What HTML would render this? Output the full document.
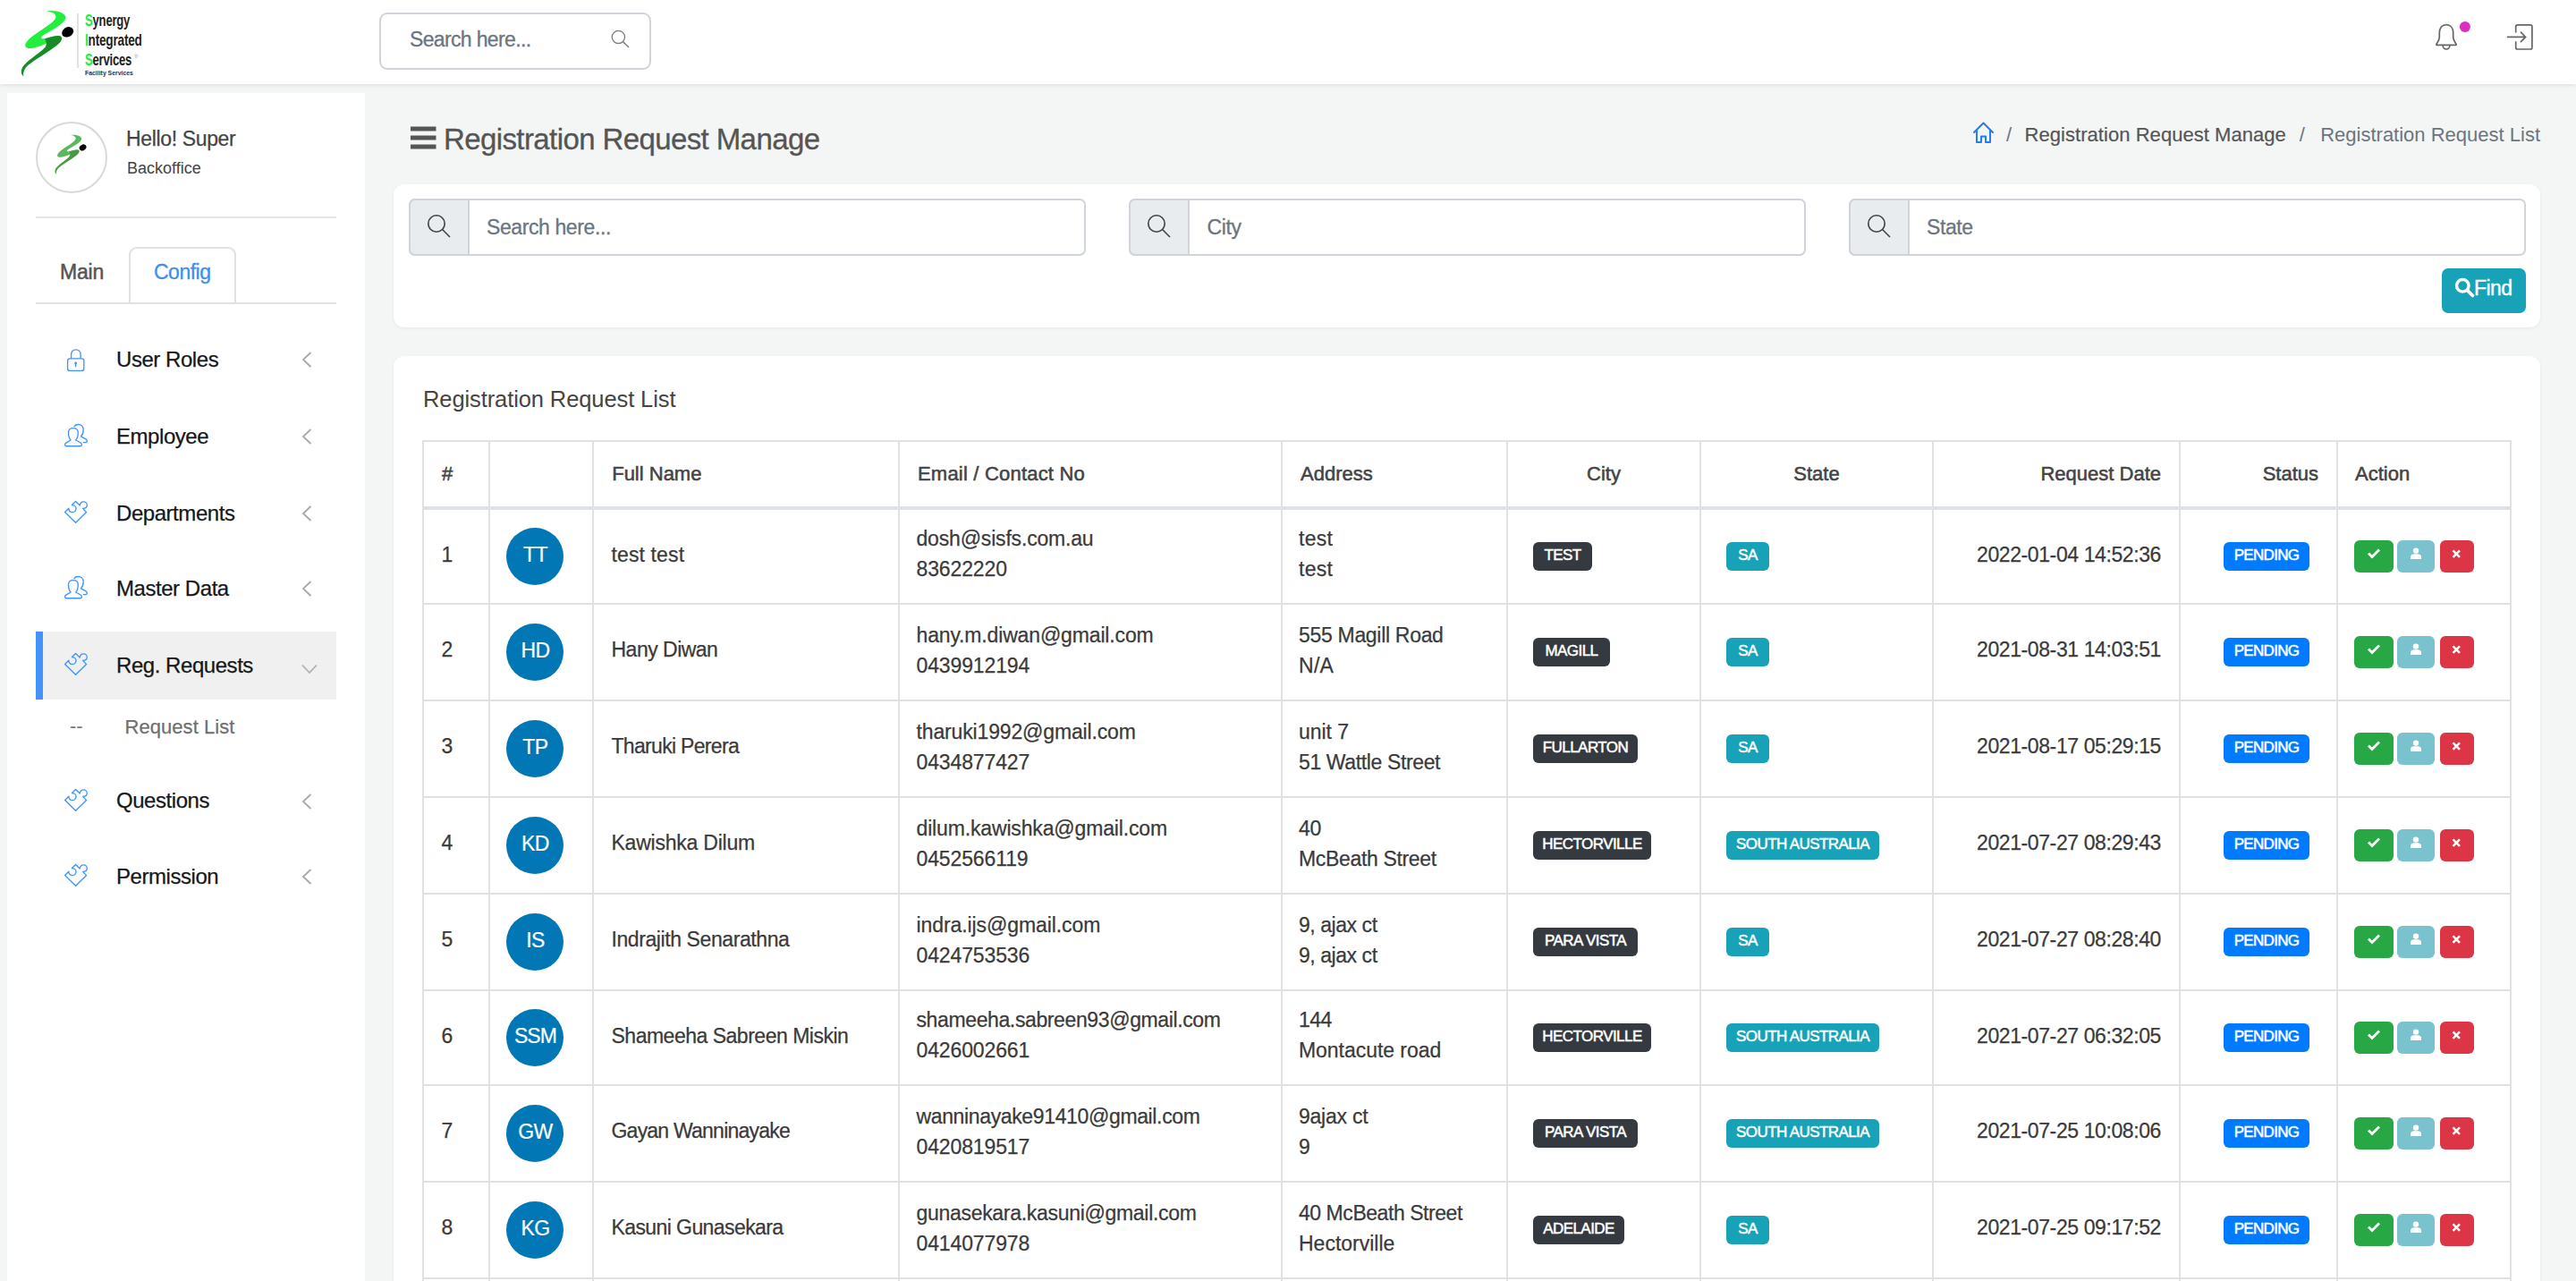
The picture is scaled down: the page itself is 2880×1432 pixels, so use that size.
<!DOCTYPE html>
<html><head><meta charset="utf-8"><title>Registration Request List</title>
<style>
html,body{margin:0;padding:0;}
body{width:2880px;height:1432px;overflow:hidden;position:relative;background:#f4f6f6;font-family:"Liberation Sans",sans-serif;}
.t{position:absolute;line-height:1;white-space:nowrap;}
.r{position:absolute;box-sizing:border-box;}
svg{position:absolute;overflow:visible;}
</style></head><body>

<div class="r" style="left:0px;top:0px;width:2880px;height:94px;background:#fff;box-shadow:0 1px 5px rgba(0,0,0,0.10);z-index:2;"></div>
<svg style="left:23.35px;top:11.13px;z-index:3" width="60.09" height="74.18" viewBox="180 150 810 1000"><path d="M575,168 C720,150 870,195 858,275 C845,355 680,440 540,520 C470,560 480,590 545,585 C620,578 700,545 770,540 L570,655 C450,705 300,765 255,705 C225,645 340,560 460,478 C580,398 700,320 712,262 C722,210 650,182 575,168 Z" fill="#22ee3c"/><path d="M545,585 C640,555 720,530 775,545 C820,560 810,620 735,680 C610,780 400,900 300,980 C235,1035 215,1095 225,1150 C180,1120 175,1040 240,975 C330,880 470,800 545,720 C580,680 575,640 545,585 Z" fill="#168c27"/><ellipse cx="890" cy="485" rx="92" ry="72" transform="rotate(-30 890 485)" fill="#000"/></svg>
<div class="r" style="left:86px;top:15px;width:2px;height:61px;background:#e2e2e2;z-index:3;"></div>
<div class="t" style="left:94.5px;top:13.59px;font-size:18.2px;font-weight:700;color:#231f20;transform:scaleX(0.72);transform-origin:0 0;z-index:3;letter-spacing:-0.3px"><span style="color:#22ee3c">S</span>ynergy</div>
<div class="t" style="left:94.5px;top:35.89px;font-size:18.2px;font-weight:700;color:#231f20;transform:scaleX(0.75);transform-origin:0 0;z-index:3;letter-spacing:-0.3px"><span style="color:#22ee3c">I</span>ntegrated</div>
<div class="t" style="left:94.5px;top:57.59px;font-size:18.2px;font-weight:700;color:#231f20;transform:scaleX(0.72);transform-origin:0 0;z-index:3;letter-spacing:-0.3px"><span style="color:#22ee3c">S</span>ervices</div>
<div class="t" style="left:150px;top:60px;font-size:6px;color:#999;z-index:3">&reg;</div>
<div class="t" style="left:94.5px;top:77.83px;font-size:8px;font-weight:700;color:#333;transform:scaleX(0.86);transform-origin:0 0;z-index:3">Facility Services</div>
<div class="r" style="left:424px;top:14px;width:304px;height:64px;border:2px solid #cfd4da;border-radius:9px;background:#fff;z-index:3;"></div>
<div class="t" style="top:33px;font-size:23px;color:#6c757d;letter-spacing:-0.65px;left:458.00px;z-index:3;-webkit-text-stroke:0.3px #6c757d;">Search here...</div>
<svg style="left:680px;top:30px;z-index:3" width="30" height="30" viewBox="0 0 30 30"><circle cx="11.4" cy="11.4" r="7.1" fill="none" stroke="#7a7a7a" stroke-width="1.3"/><line x1="16.6" y1="16.8" x2="22.6" y2="22.6" stroke="#7a7a7a" stroke-width="1.4" stroke-linecap="round"/></svg>
<svg style="left:2710px;top:15px;z-index:3" width="140" height="45" viewBox="0 0 140 45"><path d="M14,34.3 C15.5,32 17.3,30 17.3,26.5 V21.5 C17.3,16 20.5,12.6 25,12.6 C29.5,12.6 32.7,16 32.7,21.5 V26.5 C32.7,30 34.5,32 36,34.3 C36.5,35 36.2,35.3 35.3,35.3 H14.7 C13.8,35.3 13.5,35 14,34.3 Z" fill="none" stroke="#666" stroke-width="1.7" stroke-linejoin="round"/><path d="M21,35.3 C21,37.8 22.8,40 25,40 C27.2,40 29,37.8 29,35.3" fill="none" stroke="#666" stroke-width="1.7"/><circle cx="45.9" cy="14.9" r="6" fill="#dc2fbe"/><path d="M102.7,21.5 V14.8 C102.7,13.7 103.6,12.8 104.7,12.8 H118.9 C120,12.8 120.9,13.7 120.9,14.8 V38 C120.9,39.1 120,40 118.9,40 H104.7 C103.6,40 102.7,39.1 102.7,38 V31.25" fill="none" stroke="#666" stroke-width="1.7"/><path d="M93.75,26.4 H113.5 M108.4,21.2 L113.6,26.4 L108.4,31.6" fill="none" stroke="#666" stroke-width="1.7" stroke-linecap="round"/></svg>
<div class="r" style="left:8px;top:104px;width:400px;height:1328px;background:#fff;"></div>
<div class="r" style="left:40px;top:136px;width:80px;height:80px;border:2px solid #d9d9d9;border-radius:50%;background:#fff;"></div>
<svg style="left:60.80px;top:149.50px;z-index:3" width="36.05" height="44.51" viewBox="180 150 810 1000"><path d="M575,168 C720,150 870,195 858,275 C845,355 680,440 540,520 C470,560 480,590 545,585 C620,578 700,545 770,540 L570,655 C450,705 300,765 255,705 C225,645 340,560 460,478 C580,398 700,320 712,262 C722,210 650,182 575,168 Z" fill="#5cb85c"/><path d="M545,585 C640,555 720,530 775,545 C820,560 810,620 735,680 C610,780 400,900 300,980 C235,1035 215,1095 225,1150 C180,1120 175,1040 240,975 C330,880 470,800 545,720 C580,680 575,640 545,585 Z" fill="#4a9a45"/><ellipse cx="890" cy="485" rx="92" ry="72" transform="rotate(-30 890 485)" fill="#000"/></svg>
<div class="t" style="top:144px;font-size:23px;color:#444;letter-spacing:-0.35px;left:141.00px;-webkit-text-stroke:0.25px #444;">Hello! Super</div>
<div class="t" style="top:179px;font-size:18px;color:#444;left:142.00px;">Backoffice</div>
<div class="r" style="left:40px;top:242px;width:336px;height:2px;background:#e3e6e9;"></div>
<div class="t" style="top:293px;font-size:23px;color:#555;letter-spacing:-0.2px;left:67.00px;-webkit-text-stroke:0.5px #555;">Main</div>
<div class="r" style="left:144px;top:276px;width:120px;height:64px;border:2px solid #dee2e6;border-bottom:none;border-radius:9px 9px 0 0;background:#fff;"></div>
<div class="t" style="top:293px;font-size:23px;color:#3d8ef0;letter-spacing:-0.5px;left:172.00px;-webkit-text-stroke:0.3px #3d8ef0;">Config</div>
<div class="r" style="left:40px;top:338px;width:336px;height:2px;background:#dee2e6;"></div>
<div class="r" style="left:40px;top:706px;width:336px;height:76px;background:#f0f0f0;"></div>
<div class="r" style="left:40px;top:706px;width:8px;height:76px;background:#4493f8;"></div>
<div class="t" style="top:390px;font-size:24px;color:#15181b;letter-spacing:-0.45px;left:130.00px;-webkit-text-stroke:0.25px #15181b;">User Roles</div>
<svg style="left:64px;top:380px" width="44" height="44" viewBox="0 0 44 44"><rect x="11.6" y="20.8" width="18.2" height="13.6" rx="2.5" fill="none" stroke="#3f95fa" stroke-width="1.35"/><path d="M15.6,20.8 V16 C15.6,12.7 18,10.8 20.85,10.8 C23.7,10.8 26.1,12.7 26.1,16 V20.8" fill="none" stroke="#3f95fa" stroke-width="1.35"/><circle cx="20.6" cy="25.9" r="1.4" fill="#3f95fa"/><line x1="20.6" y1="26" x2="20.6" y2="29.8" stroke="#3f95fa" stroke-width="1.35" stroke-linecap="round"/></svg>
<svg style="left:337px;top:393.1px" width="12" height="18" viewBox="0 0 12 18"><path d="M10.5,1 L2,9 L10.5,17" fill="none" stroke="#a8a8a8" stroke-width="1.8"/></svg>
<div class="t" style="top:476px;font-size:24px;color:#15181b;letter-spacing:-0.45px;left:130.00px;-webkit-text-stroke:0.25px #15181b;">Employee</div>
<svg style="left:64px;top:464px" width="44" height="44" viewBox="0 0 44 44"><path d="M15.1,28 C13,26 12.5,23 12.5,19.5 C12.5,16.5 14.8,14.6 17.9,14.6 C21,14.6 23.3,16.5 23.3,19.5 C23.3,23 22.8,26 20.7,28 L26.2,31 C27.2,31.6 27.4,32.4 27.4,33.3 C27.4,34.3 26.8,34.7 25.8,34.7 H10 C9,34.7 8.6,34.2 8.6,33.3 C8.6,32.3 9,31.6 9.8,31.1 Z" fill="none" stroke="#3f95fa" stroke-width="1.35" stroke-linejoin="round"/><path d="M19,12.5 C20,11.2 21.6,10.5 23.5,10.5 C26.6,10.5 29.2,12.6 29.2,16.5 C29.2,19.5 28.5,22 26.5,23.8 L32,26.9 C33,27.5 33.3,28.3 33.3,29.2 C33.3,30.2 32.5,30.6 31.5,30.6 H29.3" fill="none" stroke="#3f95fa" stroke-width="1.35" stroke-linejoin="round" stroke-linecap="round"/></svg>
<svg style="left:337px;top:479.4px" width="12" height="18" viewBox="0 0 12 18"><path d="M10.5,1 L2,9 L10.5,17" fill="none" stroke="#a8a8a8" stroke-width="1.8"/></svg>
<div class="t" style="top:562px;font-size:24px;color:#15181b;letter-spacing:-0.45px;left:130.00px;-webkit-text-stroke:0.25px #15181b;">Departments</div>
<svg style="left:64px;top:551px" width="44" height="44" viewBox="0 0 44 44"><path d="M20.6,33.3 L8.6,21.6 L12.9,17.3 C12.6,19.9 14.7,21.6 17,21.6 C19.3,21.6 21,19.7 21,17.3 C21,15.5 19.3,13.6 16.4,13.6 L20.6,9.4 L25.2,14 C25.6,11.6 27.1,9.8 29.3,9.8 C31.6,9.8 33.3,11.6 33.3,13.7 C33.3,15.9 31.3,17.3 28.6,17.4 L32.6,21.6 Z" fill="none" stroke="#3f95fa" stroke-width="1.35" stroke-linejoin="round"/></svg>
<svg style="left:337px;top:565.1px" width="12" height="18" viewBox="0 0 12 18"><path d="M10.5,1 L2,9 L10.5,17" fill="none" stroke="#a8a8a8" stroke-width="1.8"/></svg>
<div class="t" style="top:646px;font-size:24px;color:#15181b;letter-spacing:-0.45px;left:130.00px;-webkit-text-stroke:0.25px #15181b;">Master Data</div>
<svg style="left:64px;top:634px" width="44" height="44" viewBox="0 0 44 44"><path d="M15.1,28 C13,26 12.5,23 12.5,19.5 C12.5,16.5 14.8,14.6 17.9,14.6 C21,14.6 23.3,16.5 23.3,19.5 C23.3,23 22.8,26 20.7,28 L26.2,31 C27.2,31.6 27.4,32.4 27.4,33.3 C27.4,34.3 26.8,34.7 25.8,34.7 H10 C9,34.7 8.6,34.2 8.6,33.3 C8.6,32.3 9,31.6 9.8,31.1 Z" fill="none" stroke="#3f95fa" stroke-width="1.35" stroke-linejoin="round"/><path d="M19,12.5 C20,11.2 21.6,10.5 23.5,10.5 C26.6,10.5 29.2,12.6 29.2,16.5 C29.2,19.5 28.5,22 26.5,23.8 L32,26.9 C33,27.5 33.3,28.3 33.3,29.2 C33.3,30.2 32.5,30.6 31.5,30.6 H29.3" fill="none" stroke="#3f95fa" stroke-width="1.35" stroke-linejoin="round" stroke-linecap="round"/></svg>
<svg style="left:337px;top:648.9px" width="12" height="18" viewBox="0 0 12 18"><path d="M10.5,1 L2,9 L10.5,17" fill="none" stroke="#a8a8a8" stroke-width="1.8"/></svg>
<div class="t" style="top:732px;font-size:24px;color:#15181b;letter-spacing:-0.45px;left:130.00px;-webkit-text-stroke:0.25px #15181b;">Reg. Requests</div>
<svg style="left:64px;top:721px" width="44" height="44" viewBox="0 0 44 44"><path d="M20.6,33.3 L8.6,21.6 L12.9,17.3 C12.6,19.9 14.7,21.6 17,21.6 C19.3,21.6 21,19.7 21,17.3 C21,15.5 19.3,13.6 16.4,13.6 L20.6,9.4 L25.2,14 C25.6,11.6 27.1,9.8 29.3,9.8 C31.6,9.8 33.3,11.6 33.3,13.7 C33.3,15.9 31.3,17.3 28.6,17.4 L32.6,21.6 Z" fill="none" stroke="#3f95fa" stroke-width="1.35" stroke-linejoin="round"/></svg>
<svg style="left:337px;top:741.8px" width="18" height="12" viewBox="0 0 18 12"><path d="M1,1.5 L9,10 L17,1.5" fill="none" stroke="#b0b0b0" stroke-width="1.8"/></svg>
<div class="t" style="top:883px;font-size:24px;color:#15181b;letter-spacing:-0.45px;left:130.00px;-webkit-text-stroke:0.25px #15181b;">Questions</div>
<svg style="left:64px;top:873px" width="44" height="44" viewBox="0 0 44 44"><path d="M20.6,33.3 L8.6,21.6 L12.9,17.3 C12.6,19.9 14.7,21.6 17,21.6 C19.3,21.6 21,19.7 21,17.3 C21,15.5 19.3,13.6 16.4,13.6 L20.6,9.4 L25.2,14 C25.6,11.6 27.1,9.8 29.3,9.8 C31.6,9.8 33.3,11.6 33.3,13.7 C33.3,15.9 31.3,17.3 28.6,17.4 L32.6,21.6 Z" fill="none" stroke="#3f95fa" stroke-width="1.35" stroke-linejoin="round"/></svg>
<svg style="left:337px;top:886.5px" width="12" height="18" viewBox="0 0 12 18"><path d="M10.5,1 L2,9 L10.5,17" fill="none" stroke="#a8a8a8" stroke-width="1.8"/></svg>
<div class="t" style="top:968px;font-size:24px;color:#15181b;letter-spacing:-0.45px;left:130.00px;-webkit-text-stroke:0.25px #15181b;">Permission</div>
<svg style="left:64px;top:957px" width="44" height="44" viewBox="0 0 44 44"><path d="M20.6,33.3 L8.6,21.6 L12.9,17.3 C12.6,19.9 14.7,21.6 17,21.6 C19.3,21.6 21,19.7 21,17.3 C21,15.5 19.3,13.6 16.4,13.6 L20.6,9.4 L25.2,14 C25.6,11.6 27.1,9.8 29.3,9.8 C31.6,9.8 33.3,11.6 33.3,13.7 C33.3,15.9 31.3,17.3 28.6,17.4 L32.6,21.6 Z" fill="none" stroke="#3f95fa" stroke-width="1.35" stroke-linejoin="round"/></svg>
<svg style="left:337px;top:970.9px" width="12" height="18" viewBox="0 0 12 18"><path d="M10.5,1 L2,9 L10.5,17" fill="none" stroke="#a8a8a8" stroke-width="1.8"/></svg>
<div class="t" style="top:801px;font-size:22px;color:#777;left:78.00px;">--</div>
<div class="t" style="top:802px;font-size:22px;color:#6f6f6f;letter-spacing:0.05px;left:139.50px;-webkit-text-stroke:0.25px #6f6f6f;">Request List</div>
<svg style="left:459px;top:141px" width="29" height="26" viewBox="0 0 29 26"><rect x="0" y="0.5" width="28.5" height="5" fill="#555"/><rect x="0" y="10.5" width="28.5" height="5" fill="#555"/><rect x="0" y="20.5" width="28.5" height="5" fill="#555"/></svg>
<div class="t" style="top:139px;font-size:33px;color:#555;letter-spacing:-0.6px;left:496.00px;-webkit-text-stroke:0.3px #555;">Registration Request Manage</div>
<svg style="left:2205px;top:136px" width="25" height="25" viewBox="0 0 25 25"><path d="M2,12 L12.5,1.5 L23,12 M5,9.5 V23 H10 V16.5 H15 V23 H20 V9.5" fill="none" stroke="#1e7ef5" stroke-width="2" stroke-linejoin="round" stroke-linecap="round"/></svg>
<div class="t" style="top:140px;font-size:22px;color:#6c757d;left:2236.00px;width:20px;text-align:center;">/</div>
<div class="t" style="top:140px;font-size:22px;color:#555;letter-spacing:0.05px;left:2263.50px;-webkit-text-stroke:0.2px #555;">Registration Request Manage</div>
<div class="t" style="top:140px;font-size:22px;color:#6c757d;left:2563.70px;width:20px;text-align:center;">/</div>
<div class="t" style="top:140px;font-size:22px;color:#6c757d;left:2440.00px;width:400px;text-align:right;">Registration Request List</div>
<div class="r" style="left:440px;top:206px;width:2400px;height:160px;background:#fff;border-radius:12px;box-shadow:0 1px 4px rgba(0,0,0,0.06);"></div>
<div class="r" style="left:456.5px;top:222px;width:757.0px;height:64px;border:2px solid #ced4da;border-radius:7px;background:#fff;"></div>
<div class="r" style="left:456.5px;top:222px;width:68px;height:64px;border:2px solid #ced4da;border-radius:7px 0 0 7px;background:#e9ecef;"></div>
<svg style="left:476.5px;top:239px" width="28" height="28" viewBox="0 0 28 28"><circle cx="11" cy="11" r="9.2" fill="none" stroke="#3c4146" stroke-width="1.6"/><line x1="17.8" y1="17.8" x2="26" y2="26" stroke="#3c4146" stroke-width="1.6"/></svg>
<div class="t" style="top:243px;font-size:23px;color:#6c757d;letter-spacing:-0.4px;left:544.00px;-webkit-text-stroke:0.3px #6c757d;">Search here...</div>
<div class="r" style="left:1262px;top:222px;width:757px;height:64px;border:2px solid #ced4da;border-radius:7px;background:#fff;"></div>
<div class="r" style="left:1262px;top:222px;width:68px;height:64px;border:2px solid #ced4da;border-radius:7px 0 0 7px;background:#e9ecef;"></div>
<svg style="left:1282px;top:239px" width="28" height="28" viewBox="0 0 28 28"><circle cx="11" cy="11" r="9.2" fill="none" stroke="#3c4146" stroke-width="1.6"/><line x1="17.8" y1="17.8" x2="26" y2="26" stroke="#3c4146" stroke-width="1.6"/></svg>
<div class="t" style="top:243px;font-size:23px;color:#6c757d;letter-spacing:-0.4px;left:1349.50px;-webkit-text-stroke:0.3px #6c757d;">City</div>
<div class="r" style="left:2066.5px;top:222px;width:757.0px;height:64px;border:2px solid #ced4da;border-radius:7px;background:#fff;"></div>
<div class="r" style="left:2066.5px;top:222px;width:68px;height:64px;border:2px solid #ced4da;border-radius:7px 0 0 7px;background:#e9ecef;"></div>
<svg style="left:2086.5px;top:239px" width="28" height="28" viewBox="0 0 28 28"><circle cx="11" cy="11" r="9.2" fill="none" stroke="#3c4146" stroke-width="1.6"/><line x1="17.8" y1="17.8" x2="26" y2="26" stroke="#3c4146" stroke-width="1.6"/></svg>
<div class="t" style="top:243px;font-size:23px;color:#6c757d;letter-spacing:-0.4px;left:2154.00px;-webkit-text-stroke:0.3px #6c757d;">State</div>
<div class="r" style="left:2730px;top:300px;width:94px;height:50px;background:#17a2b8;border-radius:7px;"></div>
<svg style="left:2744px;top:310px" width="23" height="23" viewBox="0 0 23 23"><circle cx="9.3" cy="9.3" r="6.8" fill="none" stroke="#fff" stroke-width="3.4"/><line x1="14.5" y1="14.5" x2="20.5" y2="20.5" stroke="#fff" stroke-width="3.8" stroke-linecap="round"/></svg>
<div class="t" style="top:311px;font-size:23px;color:#fff;letter-spacing:-0.6px;left:2766.00px;-webkit-text-stroke:0.4px #fff;">Find</div>
<div class="r" style="left:440px;top:398px;width:2400px;height:1102px;background:#fff;border-radius:12px;box-shadow:0 1px 4px rgba(0,0,0,0.06);"></div>
<div class="t" style="top:434px;font-size:25.5px;color:#444;letter-spacing:-0.1px;left:473.00px;">Registration Request List</div>
<div class="r" style="left:472px;top:492px;width:2px;height:940px;background:#dee2e6;"></div>
<div class="r" style="left:546px;top:492px;width:2px;height:940px;background:#dee2e6;"></div>
<div class="r" style="left:662px;top:492px;width:2px;height:940px;background:#dee2e6;"></div>
<div class="r" style="left:1004px;top:492px;width:2px;height:940px;background:#dee2e6;"></div>
<div class="r" style="left:1432px;top:492px;width:2px;height:940px;background:#dee2e6;"></div>
<div class="r" style="left:1684px;top:492px;width:2px;height:940px;background:#dee2e6;"></div>
<div class="r" style="left:1900px;top:492px;width:2px;height:940px;background:#dee2e6;"></div>
<div class="r" style="left:2160px;top:492px;width:2px;height:940px;background:#dee2e6;"></div>
<div class="r" style="left:2436px;top:492px;width:2px;height:940px;background:#dee2e6;"></div>
<div class="r" style="left:2612px;top:492px;width:2px;height:940px;background:#dee2e6;"></div>
<div class="r" style="left:2806px;top:492px;width:2px;height:940px;background:#dee2e6;"></div>
<div class="r" style="left:472px;top:492px;width:2336px;height:2px;background:#dee2e6;"></div>
<div class="r" style="left:472px;top:566px;width:2336px;height:4px;background:#dee2e6;"></div>
<div class="r" style="left:472px;top:674px;width:2336px;height:2px;background:#dee2e6;"></div>
<div class="r" style="left:472px;top:782px;width:2336px;height:2px;background:#dee2e6;"></div>
<div class="r" style="left:472px;top:890px;width:2336px;height:2px;background:#dee2e6;"></div>
<div class="r" style="left:472px;top:998px;width:2336px;height:2px;background:#dee2e6;"></div>
<div class="r" style="left:472px;top:1106px;width:2336px;height:2px;background:#dee2e6;"></div>
<div class="r" style="left:472px;top:1212px;width:2336px;height:2px;background:#dee2e6;"></div>
<div class="r" style="left:472px;top:1320px;width:2336px;height:2px;background:#dee2e6;"></div>
<div class="r" style="left:472px;top:1428px;width:2336px;height:2px;background:#dee2e6;"></div>
<div class="t" style="top:519px;font-size:22px;color:#444;left:494.00px;-webkit-text-stroke:0.55px #444;">#</div>
<div class="t" style="top:519px;font-size:22px;color:#444;left:684.20px;-webkit-text-stroke:0.55px #444;">Full Name</div>
<div class="t" style="top:519px;font-size:22px;color:#444;letter-spacing:0.2px;left:1026.00px;-webkit-text-stroke:0.55px #444;">Email / Contact No</div>
<div class="t" style="top:519px;font-size:22px;color:#444;left:1454.00px;-webkit-text-stroke:0.55px #444;">Address</div>
<div class="t" style="top:519px;font-size:22px;color:#444;left:1693.00px;width:200px;text-align:center;-webkit-text-stroke:0.55px #444;">City</div>
<div class="t" style="top:519px;font-size:22px;color:#444;left:1931.00px;width:200px;text-align:center;-webkit-text-stroke:0.55px #444;">State</div>
<div class="t" style="top:519px;font-size:22px;color:#444;left:2116.00px;width:300px;text-align:right;-webkit-text-stroke:0.55px #444;">Request Date</div>
<div class="t" style="top:519px;font-size:22px;color:#444;left:2392.00px;width:200px;text-align:right;-webkit-text-stroke:0.55px #444;">Status</div>
<div class="t" style="top:519px;font-size:22px;color:#444;left:2633.00px;-webkit-text-stroke:0.55px #444;">Action</div>
<div class="t" style="top:609px;font-size:23px;color:#3a3a3a;left:493.50px;-webkit-text-stroke:0.25px #3a3a3a;">1</div>
<div class="r" style="left:566px;top:590.00px;width:64px;height:64px;border-radius:50%;background:#0277b6;"></div>
<div class="t" style="top:609px;font-size:23px;color:#fff;letter-spacing:-0.5px;left:566.50px;width:64px;text-align:center;-webkit-text-stroke:0.2px #fff;">TT</div>
<div class="t" style="top:609px;font-size:23px;color:#3a3a3a;letter-spacing:0.125px;left:683.50px;-webkit-text-stroke:0.25px #3a3a3a;">test test</div>
<div class="t" style="top:591px;font-size:23px;color:#3a3a3a;letter-spacing:-0.18px;left:1024.50px;-webkit-text-stroke:0.25px #3a3a3a;">dosh@sisfs.com.au</div>
<div class="t" style="top:625px;font-size:23px;color:#3a3a3a;letter-spacing:-0.12px;left:1024.50px;-webkit-text-stroke:0.25px #3a3a3a;">83622220</div>
<div class="t" style="top:591px;font-size:23px;color:#3a3a3a;letter-spacing:0.267px;left:1452.00px;-webkit-text-stroke:0.25px #3a3a3a;">test</div>
<div class="t" style="top:625px;font-size:23px;color:#3a3a3a;letter-spacing:0.267px;left:1452.00px;-webkit-text-stroke:0.25px #3a3a3a;">test</div>
<div class="r" style="left:1714px;top:605.5px;width:66px;height:32.0px;background:#343a40;border-radius:6px;"></div>
<div class="t" style="top:612px;font-size:17px;color:#fff;letter-spacing:-0.55px;left:1694.00px;width:106px;text-align:center;-webkit-text-stroke:0.5px #fff;">TEST</div>
<div class="r" style="left:1930px;top:605.5px;width:48px;height:32.0px;background:#17a2b8;border-radius:6px;"></div>
<div class="t" style="top:612px;font-size:17px;color:#fff;letter-spacing:-0.6px;left:1910.00px;width:88px;text-align:center;-webkit-text-stroke:0.5px #fff;">SA</div>
<div class="t" style="top:609px;font-size:23px;color:#3a3a3a;letter-spacing:-0.4px;left:2116.00px;width:300px;text-align:right;-webkit-text-stroke:0.25px #3a3a3a;">2022-01-04 14:52:36</div>
<div class="r" style="left:2486px;top:605.5px;width:96px;height:32.0px;background:#007bff;border-radius:6px;"></div>
<div class="t" style="top:612px;font-size:17px;color:#fff;letter-spacing:-0.7px;left:2464.00px;width:140px;text-align:center;-webkit-text-stroke:0.5px #fff;">PENDING</div>
<div class="r" style="left:2632px;top:603.5px;width:44px;height:36.0px;background:#28a745;border-radius:6px;"></div>
<div class="r" style="left:2680px;top:603.5px;width:42px;height:36.0px;background:#7ac3ce;border-radius:6px;"></div>
<div class="r" style="left:2728px;top:603.5px;width:38px;height:36.0px;background:#dc3545;border-radius:6px;"></div>
<svg style="left:2646px;top:613.00px" width="16" height="12" viewBox="0 0 16 12"><path d="M2,5.5 L6,9.5 L14,1.5" fill="none" stroke="#fff" stroke-width="2.8"/></svg>
<svg style="left:2694px;top:612.00px" width="14" height="14" viewBox="0 0 14 14"><circle cx="7" cy="3.6" r="3.2" fill="#fff"/><path d="M1,10.5 C1,8 3,7.2 5,7.2 H9 C11,7.2 13,8 13,10.5 V13 H1 Z" fill="#fff"/></svg>
<svg style="left:2740px;top:613.00px" width="12" height="12" viewBox="0 0 12 12"><path d="M2.5,2.3 L10,9.8 M10,2.3 L2.5,9.8" fill="none" stroke="#fff" stroke-width="2.5"/></svg>
<div class="t" style="top:715px;font-size:23px;color:#3a3a3a;left:493.50px;-webkit-text-stroke:0.25px #3a3a3a;">2</div>
<div class="r" style="left:566px;top:697.00px;width:64px;height:64px;border-radius:50%;background:#0277b6;"></div>
<div class="t" style="top:716px;font-size:23px;color:#fff;letter-spacing:-0.5px;left:566.50px;width:64px;text-align:center;-webkit-text-stroke:0.2px #fff;">HD</div>
<div class="t" style="top:715px;font-size:23px;color:#3a3a3a;letter-spacing:-0.511px;left:683.50px;-webkit-text-stroke:0.25px #3a3a3a;">Hany Diwan</div>
<div class="t" style="top:699px;font-size:23px;color:#3a3a3a;letter-spacing:-0.15px;left:1024.50px;-webkit-text-stroke:0.25px #3a3a3a;">hany.m.diwan@gmail.com</div>
<div class="t" style="top:733px;font-size:23px;color:#3a3a3a;letter-spacing:-0.12px;left:1024.50px;-webkit-text-stroke:0.25px #3a3a3a;">0439912194</div>
<div class="t" style="top:699px;font-size:23px;color:#3a3a3a;letter-spacing:-0.307px;left:1452.00px;-webkit-text-stroke:0.25px #3a3a3a;">555 Magill Road</div>
<div class="t" style="top:733px;font-size:23px;color:#3a3a3a;letter-spacing:0.3px;left:1452.00px;-webkit-text-stroke:0.25px #3a3a3a;">N/A</div>
<div class="r" style="left:1714px;top:712.5px;width:86px;height:32.0px;background:#343a40;border-radius:6px;"></div>
<div class="t" style="top:719px;font-size:17px;color:#fff;letter-spacing:-0.55px;left:1694.00px;width:126px;text-align:center;-webkit-text-stroke:0.5px #fff;">MAGILL</div>
<div class="r" style="left:1930px;top:712.5px;width:48px;height:32.0px;background:#17a2b8;border-radius:6px;"></div>
<div class="t" style="top:719px;font-size:17px;color:#fff;letter-spacing:-0.6px;left:1910.00px;width:88px;text-align:center;-webkit-text-stroke:0.5px #fff;">SA</div>
<div class="t" style="top:715px;font-size:23px;color:#3a3a3a;letter-spacing:-0.4px;left:2116.00px;width:300px;text-align:right;-webkit-text-stroke:0.25px #3a3a3a;">2021-08-31 14:03:51</div>
<div class="r" style="left:2486px;top:712.5px;width:96px;height:32.0px;background:#007bff;border-radius:6px;"></div>
<div class="t" style="top:719px;font-size:17px;color:#fff;letter-spacing:-0.7px;left:2464.00px;width:140px;text-align:center;-webkit-text-stroke:0.5px #fff;">PENDING</div>
<div class="r" style="left:2632px;top:710.5px;width:44px;height:36.0px;background:#28a745;border-radius:6px;"></div>
<div class="r" style="left:2680px;top:710.5px;width:42px;height:36.0px;background:#7ac3ce;border-radius:6px;"></div>
<div class="r" style="left:2728px;top:710.5px;width:38px;height:36.0px;background:#dc3545;border-radius:6px;"></div>
<svg style="left:2646px;top:720.00px" width="16" height="12" viewBox="0 0 16 12"><path d="M2,5.5 L6,9.5 L14,1.5" fill="none" stroke="#fff" stroke-width="2.8"/></svg>
<svg style="left:2694px;top:719.00px" width="14" height="14" viewBox="0 0 14 14"><circle cx="7" cy="3.6" r="3.2" fill="#fff"/><path d="M1,10.5 C1,8 3,7.2 5,7.2 H9 C11,7.2 13,8 13,10.5 V13 H1 Z" fill="#fff"/></svg>
<svg style="left:2740px;top:720.00px" width="12" height="12" viewBox="0 0 12 12"><path d="M2.5,2.3 L10,9.8 M10,2.3 L2.5,9.8" fill="none" stroke="#fff" stroke-width="2.5"/></svg>
<div class="t" style="top:823px;font-size:23px;color:#3a3a3a;left:493.50px;-webkit-text-stroke:0.25px #3a3a3a;">3</div>
<div class="r" style="left:566px;top:805.00px;width:64px;height:64px;border-radius:50%;background:#0277b6;"></div>
<div class="t" style="top:824px;font-size:23px;color:#fff;letter-spacing:-0.5px;left:566.50px;width:64px;text-align:center;-webkit-text-stroke:0.2px #fff;">TP</div>
<div class="t" style="top:823px;font-size:23px;color:#3a3a3a;letter-spacing:-0.685px;left:683.50px;-webkit-text-stroke:0.25px #3a3a3a;">Tharuki Perera</div>
<div class="t" style="top:807px;font-size:23px;color:#3a3a3a;letter-spacing:-0.15px;left:1024.50px;-webkit-text-stroke:0.25px #3a3a3a;">tharuki1992@gmail.com</div>
<div class="t" style="top:841px;font-size:23px;color:#3a3a3a;letter-spacing:-0.12px;left:1024.50px;-webkit-text-stroke:0.25px #3a3a3a;">0434877427</div>
<div class="t" style="top:807px;font-size:23px;color:#3a3a3a;letter-spacing:-0.06px;left:1452.00px;-webkit-text-stroke:0.25px #3a3a3a;">unit 7</div>
<div class="t" style="top:841px;font-size:23px;color:#3a3a3a;letter-spacing:-0.373px;left:1452.00px;-webkit-text-stroke:0.25px #3a3a3a;">51 Wattle Street</div>
<div class="r" style="left:1714px;top:820.5px;width:117px;height:32.0px;background:#343a40;border-radius:6px;"></div>
<div class="t" style="top:827px;font-size:17px;color:#fff;letter-spacing:-0.55px;left:1694.00px;width:157px;text-align:center;-webkit-text-stroke:0.5px #fff;">FULLARTON</div>
<div class="r" style="left:1930px;top:820.5px;width:48px;height:32.0px;background:#17a2b8;border-radius:6px;"></div>
<div class="t" style="top:827px;font-size:17px;color:#fff;letter-spacing:-0.6px;left:1910.00px;width:88px;text-align:center;-webkit-text-stroke:0.5px #fff;">SA</div>
<div class="t" style="top:823px;font-size:23px;color:#3a3a3a;letter-spacing:-0.4px;left:2116.00px;width:300px;text-align:right;-webkit-text-stroke:0.25px #3a3a3a;">2021-08-17 05:29:15</div>
<div class="r" style="left:2486px;top:820.5px;width:96px;height:32.0px;background:#007bff;border-radius:6px;"></div>
<div class="t" style="top:827px;font-size:17px;color:#fff;letter-spacing:-0.7px;left:2464.00px;width:140px;text-align:center;-webkit-text-stroke:0.5px #fff;">PENDING</div>
<div class="r" style="left:2632px;top:818.5px;width:44px;height:36.0px;background:#28a745;border-radius:6px;"></div>
<div class="r" style="left:2680px;top:818.5px;width:42px;height:36.0px;background:#7ac3ce;border-radius:6px;"></div>
<div class="r" style="left:2728px;top:818.5px;width:38px;height:36.0px;background:#dc3545;border-radius:6px;"></div>
<svg style="left:2646px;top:828.00px" width="16" height="12" viewBox="0 0 16 12"><path d="M2,5.5 L6,9.5 L14,1.5" fill="none" stroke="#fff" stroke-width="2.8"/></svg>
<svg style="left:2694px;top:827.00px" width="14" height="14" viewBox="0 0 14 14"><circle cx="7" cy="3.6" r="3.2" fill="#fff"/><path d="M1,10.5 C1,8 3,7.2 5,7.2 H9 C11,7.2 13,8 13,10.5 V13 H1 Z" fill="#fff"/></svg>
<svg style="left:2740px;top:828.00px" width="12" height="12" viewBox="0 0 12 12"><path d="M2.5,2.3 L10,9.8 M10,2.3 L2.5,9.8" fill="none" stroke="#fff" stroke-width="2.5"/></svg>
<div class="t" style="top:931px;font-size:23px;color:#3a3a3a;left:493.50px;-webkit-text-stroke:0.25px #3a3a3a;">4</div>
<div class="r" style="left:566px;top:913.00px;width:64px;height:64px;border-radius:50%;background:#0277b6;"></div>
<div class="t" style="top:932px;font-size:23px;color:#fff;letter-spacing:-0.5px;left:566.50px;width:64px;text-align:center;-webkit-text-stroke:0.2px #fff;">KD</div>
<div class="t" style="top:931px;font-size:23px;color:#3a3a3a;letter-spacing:-0.223px;left:683.50px;-webkit-text-stroke:0.25px #3a3a3a;">Kawishka Dilum</div>
<div class="t" style="top:915px;font-size:23px;color:#3a3a3a;letter-spacing:-0.15px;left:1024.50px;-webkit-text-stroke:0.25px #3a3a3a;">dilum.kawishka@gmail.com</div>
<div class="t" style="top:949px;font-size:23px;color:#3a3a3a;letter-spacing:-0.12px;left:1024.50px;-webkit-text-stroke:0.25px #3a3a3a;">0452566119</div>
<div class="t" style="top:915px;font-size:23px;color:#3a3a3a;letter-spacing:-0.2px;left:1452.00px;-webkit-text-stroke:0.25px #3a3a3a;">40</div>
<div class="t" style="top:949px;font-size:23px;color:#3a3a3a;letter-spacing:-0.338px;left:1452.00px;-webkit-text-stroke:0.25px #3a3a3a;">McBeath Street</div>
<div class="r" style="left:1714px;top:928.5px;width:132px;height:32.0px;background:#343a40;border-radius:6px;"></div>
<div class="t" style="top:935px;font-size:17px;color:#fff;letter-spacing:-0.55px;left:1694.00px;width:172px;text-align:center;-webkit-text-stroke:0.5px #fff;">HECTORVILLE</div>
<div class="r" style="left:1930px;top:928.5px;width:171px;height:32.0px;background:#17a2b8;border-radius:6px;"></div>
<div class="t" style="top:935px;font-size:17px;color:#fff;letter-spacing:-0.6px;left:1910.00px;width:211px;text-align:center;-webkit-text-stroke:0.5px #fff;">SOUTH AUSTRALIA</div>
<div class="t" style="top:931px;font-size:23px;color:#3a3a3a;letter-spacing:-0.4px;left:2116.00px;width:300px;text-align:right;-webkit-text-stroke:0.25px #3a3a3a;">2021-07-27 08:29:43</div>
<div class="r" style="left:2486px;top:928.5px;width:96px;height:32.0px;background:#007bff;border-radius:6px;"></div>
<div class="t" style="top:935px;font-size:17px;color:#fff;letter-spacing:-0.7px;left:2464.00px;width:140px;text-align:center;-webkit-text-stroke:0.5px #fff;">PENDING</div>
<div class="r" style="left:2632px;top:926.5px;width:44px;height:36.0px;background:#28a745;border-radius:6px;"></div>
<div class="r" style="left:2680px;top:926.5px;width:42px;height:36.0px;background:#7ac3ce;border-radius:6px;"></div>
<div class="r" style="left:2728px;top:926.5px;width:38px;height:36.0px;background:#dc3545;border-radius:6px;"></div>
<svg style="left:2646px;top:936.00px" width="16" height="12" viewBox="0 0 16 12"><path d="M2,5.5 L6,9.5 L14,1.5" fill="none" stroke="#fff" stroke-width="2.8"/></svg>
<svg style="left:2694px;top:935.00px" width="14" height="14" viewBox="0 0 14 14"><circle cx="7" cy="3.6" r="3.2" fill="#fff"/><path d="M1,10.5 C1,8 3,7.2 5,7.2 H9 C11,7.2 13,8 13,10.5 V13 H1 Z" fill="#fff"/></svg>
<svg style="left:2740px;top:936.00px" width="12" height="12" viewBox="0 0 12 12"><path d="M2.5,2.3 L10,9.8 M10,2.3 L2.5,9.8" fill="none" stroke="#fff" stroke-width="2.5"/></svg>
<div class="t" style="top:1039px;font-size:23px;color:#3a3a3a;left:493.50px;-webkit-text-stroke:0.25px #3a3a3a;">5</div>
<div class="r" style="left:566px;top:1021.00px;width:64px;height:64px;border-radius:50%;background:#0277b6;"></div>
<div class="t" style="top:1040px;font-size:23px;color:#fff;letter-spacing:-0.5px;left:566.50px;width:64px;text-align:center;-webkit-text-stroke:0.2px #fff;">IS</div>
<div class="t" style="top:1039px;font-size:23px;color:#3a3a3a;letter-spacing:-0.411px;left:683.50px;-webkit-text-stroke:0.25px #3a3a3a;">Indrajith Senarathna</div>
<div class="t" style="top:1023px;font-size:23px;color:#3a3a3a;letter-spacing:-0.09px;left:1024.50px;-webkit-text-stroke:0.25px #3a3a3a;">indra.ijs@gmail.com</div>
<div class="t" style="top:1057px;font-size:23px;color:#3a3a3a;letter-spacing:-0.12px;left:1024.50px;-webkit-text-stroke:0.25px #3a3a3a;">0424753536</div>
<div class="t" style="top:1023px;font-size:23px;color:#3a3a3a;letter-spacing:-0.444px;left:1452.00px;-webkit-text-stroke:0.25px #3a3a3a;">9, ajax ct</div>
<div class="t" style="top:1057px;font-size:23px;color:#3a3a3a;letter-spacing:-0.444px;left:1452.00px;-webkit-text-stroke:0.25px #3a3a3a;">9, ajax ct</div>
<div class="r" style="left:1714px;top:1036.5px;width:117px;height:32.0px;background:#343a40;border-radius:6px;"></div>
<div class="t" style="top:1043px;font-size:17px;color:#fff;letter-spacing:-0.55px;left:1694.00px;width:157px;text-align:center;-webkit-text-stroke:0.5px #fff;">PARA VISTA</div>
<div class="r" style="left:1930px;top:1036.5px;width:48px;height:32.0px;background:#17a2b8;border-radius:6px;"></div>
<div class="t" style="top:1043px;font-size:17px;color:#fff;letter-spacing:-0.6px;left:1910.00px;width:88px;text-align:center;-webkit-text-stroke:0.5px #fff;">SA</div>
<div class="t" style="top:1039px;font-size:23px;color:#3a3a3a;letter-spacing:-0.4px;left:2116.00px;width:300px;text-align:right;-webkit-text-stroke:0.25px #3a3a3a;">2021-07-27 08:28:40</div>
<div class="r" style="left:2486px;top:1036.5px;width:96px;height:32.0px;background:#007bff;border-radius:6px;"></div>
<div class="t" style="top:1043px;font-size:17px;color:#fff;letter-spacing:-0.7px;left:2464.00px;width:140px;text-align:center;-webkit-text-stroke:0.5px #fff;">PENDING</div>
<div class="r" style="left:2632px;top:1034.5px;width:44px;height:36.0px;background:#28a745;border-radius:6px;"></div>
<div class="r" style="left:2680px;top:1034.5px;width:42px;height:36.0px;background:#7ac3ce;border-radius:6px;"></div>
<div class="r" style="left:2728px;top:1034.5px;width:38px;height:36.0px;background:#dc3545;border-radius:6px;"></div>
<svg style="left:2646px;top:1044.00px" width="16" height="12" viewBox="0 0 16 12"><path d="M2,5.5 L6,9.5 L14,1.5" fill="none" stroke="#fff" stroke-width="2.8"/></svg>
<svg style="left:2694px;top:1043.00px" width="14" height="14" viewBox="0 0 14 14"><circle cx="7" cy="3.6" r="3.2" fill="#fff"/><path d="M1,10.5 C1,8 3,7.2 5,7.2 H9 C11,7.2 13,8 13,10.5 V13 H1 Z" fill="#fff"/></svg>
<svg style="left:2740px;top:1044.00px" width="12" height="12" viewBox="0 0 12 12"><path d="M2.5,2.3 L10,9.8 M10,2.3 L2.5,9.8" fill="none" stroke="#fff" stroke-width="2.5"/></svg>
<div class="t" style="top:1147px;font-size:23px;color:#3a3a3a;left:493.50px;-webkit-text-stroke:0.25px #3a3a3a;">6</div>
<div class="r" style="left:566px;top:1128.00px;width:64px;height:64px;border-radius:50%;background:#0277b6;"></div>
<div class="t" style="top:1147px;font-size:23px;color:#fff;letter-spacing:-0.9px;left:566.50px;width:64px;text-align:center;-webkit-text-stroke:0.2px #fff;">SSM</div>
<div class="t" style="top:1147px;font-size:23px;color:#3a3a3a;letter-spacing:-0.491px;left:683.50px;-webkit-text-stroke:0.25px #3a3a3a;">Shameeha Sabreen Miskin</div>
<div class="t" style="top:1129px;font-size:23px;color:#3a3a3a;letter-spacing:-0.38px;left:1024.50px;-webkit-text-stroke:0.25px #3a3a3a;">shameeha.sabreen93@gmail.com</div>
<div class="t" style="top:1163px;font-size:23px;color:#3a3a3a;letter-spacing:-0.12px;left:1024.50px;-webkit-text-stroke:0.25px #3a3a3a;">0426002661</div>
<div class="t" style="top:1129px;font-size:23px;color:#3a3a3a;letter-spacing:-0.55px;left:1452.00px;-webkit-text-stroke:0.25px #3a3a3a;">144</div>
<div class="t" style="top:1163px;font-size:23px;color:#3a3a3a;letter-spacing:-0.046px;left:1452.00px;-webkit-text-stroke:0.25px #3a3a3a;">Montacute road</div>
<div class="r" style="left:1714px;top:1143.5px;width:132px;height:32.0px;background:#343a40;border-radius:6px;"></div>
<div class="t" style="top:1150px;font-size:17px;color:#fff;letter-spacing:-0.55px;left:1694.00px;width:172px;text-align:center;-webkit-text-stroke:0.5px #fff;">HECTORVILLE</div>
<div class="r" style="left:1930px;top:1143.5px;width:171px;height:32.0px;background:#17a2b8;border-radius:6px;"></div>
<div class="t" style="top:1150px;font-size:17px;color:#fff;letter-spacing:-0.6px;left:1910.00px;width:211px;text-align:center;-webkit-text-stroke:0.5px #fff;">SOUTH AUSTRALIA</div>
<div class="t" style="top:1147px;font-size:23px;color:#3a3a3a;letter-spacing:-0.4px;left:2116.00px;width:300px;text-align:right;-webkit-text-stroke:0.25px #3a3a3a;">2021-07-27 06:32:05</div>
<div class="r" style="left:2486px;top:1143.5px;width:96px;height:32.0px;background:#007bff;border-radius:6px;"></div>
<div class="t" style="top:1150px;font-size:17px;color:#fff;letter-spacing:-0.7px;left:2464.00px;width:140px;text-align:center;-webkit-text-stroke:0.5px #fff;">PENDING</div>
<div class="r" style="left:2632px;top:1141.5px;width:44px;height:36.0px;background:#28a745;border-radius:6px;"></div>
<div class="r" style="left:2680px;top:1141.5px;width:42px;height:36.0px;background:#7ac3ce;border-radius:6px;"></div>
<div class="r" style="left:2728px;top:1141.5px;width:38px;height:36.0px;background:#dc3545;border-radius:6px;"></div>
<svg style="left:2646px;top:1151.00px" width="16" height="12" viewBox="0 0 16 12"><path d="M2,5.5 L6,9.5 L14,1.5" fill="none" stroke="#fff" stroke-width="2.8"/></svg>
<svg style="left:2694px;top:1150.00px" width="14" height="14" viewBox="0 0 14 14"><circle cx="7" cy="3.6" r="3.2" fill="#fff"/><path d="M1,10.5 C1,8 3,7.2 5,7.2 H9 C11,7.2 13,8 13,10.5 V13 H1 Z" fill="#fff"/></svg>
<svg style="left:2740px;top:1151.00px" width="12" height="12" viewBox="0 0 12 12"><path d="M2.5,2.3 L10,9.8 M10,2.3 L2.5,9.8" fill="none" stroke="#fff" stroke-width="2.5"/></svg>
<div class="t" style="top:1253px;font-size:23px;color:#3a3a3a;left:493.50px;-webkit-text-stroke:0.25px #3a3a3a;">7</div>
<div class="r" style="left:566px;top:1235.00px;width:64px;height:64px;border-radius:50%;background:#0277b6;"></div>
<div class="t" style="top:1254px;font-size:23px;color:#fff;letter-spacing:-0.5px;left:566.50px;width:64px;text-align:center;-webkit-text-stroke:0.2px #fff;">GW</div>
<div class="t" style="top:1253px;font-size:23px;color:#3a3a3a;letter-spacing:-0.775px;left:683.50px;-webkit-text-stroke:0.25px #3a3a3a;">Gayan Wanninayake</div>
<div class="t" style="top:1237px;font-size:23px;color:#3a3a3a;letter-spacing:-0.36px;left:1024.50px;-webkit-text-stroke:0.25px #3a3a3a;">wanninayake91410@gmail.com</div>
<div class="t" style="top:1271px;font-size:23px;color:#3a3a3a;letter-spacing:-0.12px;left:1024.50px;-webkit-text-stroke:0.25px #3a3a3a;">0420819517</div>
<div class="t" style="top:1237px;font-size:23px;color:#3a3a3a;letter-spacing:-0.243px;left:1452.00px;-webkit-text-stroke:0.25px #3a3a3a;">9ajax ct</div>
<div class="t" style="top:1271px;font-size:23px;color:#3a3a3a;letter-spacing:-0.2px;left:1452.00px;-webkit-text-stroke:0.25px #3a3a3a;">9</div>
<div class="r" style="left:1714px;top:1250.5px;width:117px;height:32.0px;background:#343a40;border-radius:6px;"></div>
<div class="t" style="top:1257px;font-size:17px;color:#fff;letter-spacing:-0.55px;left:1694.00px;width:157px;text-align:center;-webkit-text-stroke:0.5px #fff;">PARA VISTA</div>
<div class="r" style="left:1930px;top:1250.5px;width:171px;height:32.0px;background:#17a2b8;border-radius:6px;"></div>
<div class="t" style="top:1257px;font-size:17px;color:#fff;letter-spacing:-0.6px;left:1910.00px;width:211px;text-align:center;-webkit-text-stroke:0.5px #fff;">SOUTH AUSTRALIA</div>
<div class="t" style="top:1253px;font-size:23px;color:#3a3a3a;letter-spacing:-0.4px;left:2116.00px;width:300px;text-align:right;-webkit-text-stroke:0.25px #3a3a3a;">2021-07-25 10:08:06</div>
<div class="r" style="left:2486px;top:1250.5px;width:96px;height:32.0px;background:#007bff;border-radius:6px;"></div>
<div class="t" style="top:1257px;font-size:17px;color:#fff;letter-spacing:-0.7px;left:2464.00px;width:140px;text-align:center;-webkit-text-stroke:0.5px #fff;">PENDING</div>
<div class="r" style="left:2632px;top:1248.5px;width:44px;height:36.0px;background:#28a745;border-radius:6px;"></div>
<div class="r" style="left:2680px;top:1248.5px;width:42px;height:36.0px;background:#7ac3ce;border-radius:6px;"></div>
<div class="r" style="left:2728px;top:1248.5px;width:38px;height:36.0px;background:#dc3545;border-radius:6px;"></div>
<svg style="left:2646px;top:1258.00px" width="16" height="12" viewBox="0 0 16 12"><path d="M2,5.5 L6,9.5 L14,1.5" fill="none" stroke="#fff" stroke-width="2.8"/></svg>
<svg style="left:2694px;top:1257.00px" width="14" height="14" viewBox="0 0 14 14"><circle cx="7" cy="3.6" r="3.2" fill="#fff"/><path d="M1,10.5 C1,8 3,7.2 5,7.2 H9 C11,7.2 13,8 13,10.5 V13 H1 Z" fill="#fff"/></svg>
<svg style="left:2740px;top:1258.00px" width="12" height="12" viewBox="0 0 12 12"><path d="M2.5,2.3 L10,9.8 M10,2.3 L2.5,9.8" fill="none" stroke="#fff" stroke-width="2.5"/></svg>
<div class="t" style="top:1361px;font-size:23px;color:#3a3a3a;left:493.50px;-webkit-text-stroke:0.25px #3a3a3a;">8</div>
<div class="r" style="left:566px;top:1343.00px;width:64px;height:64px;border-radius:50%;background:#0277b6;"></div>
<div class="t" style="top:1362px;font-size:23px;color:#fff;letter-spacing:-0.5px;left:566.50px;width:64px;text-align:center;-webkit-text-stroke:0.2px #fff;">KG</div>
<div class="t" style="top:1361px;font-size:23px;color:#3a3a3a;letter-spacing:-0.588px;left:683.50px;-webkit-text-stroke:0.25px #3a3a3a;">Kasuni Gunasekara</div>
<div class="t" style="top:1345px;font-size:23px;color:#3a3a3a;letter-spacing:-0.3px;left:1024.50px;-webkit-text-stroke:0.25px #3a3a3a;">gunasekara.kasuni@gmail.com</div>
<div class="t" style="top:1379px;font-size:23px;color:#3a3a3a;letter-spacing:-0.12px;left:1024.50px;-webkit-text-stroke:0.25px #3a3a3a;">0414077978</div>
<div class="t" style="top:1345px;font-size:23px;color:#3a3a3a;letter-spacing:-0.45px;left:1452.00px;-webkit-text-stroke:0.25px #3a3a3a;">40 McBeath Street</div>
<div class="t" style="top:1379px;font-size:23px;color:#3a3a3a;letter-spacing:0.0px;left:1452.00px;-webkit-text-stroke:0.25px #3a3a3a;">Hectorville</div>
<div class="r" style="left:1714px;top:1358.5px;width:102px;height:32.0px;background:#343a40;border-radius:6px;"></div>
<div class="t" style="top:1365px;font-size:17px;color:#fff;letter-spacing:-0.55px;left:1694.00px;width:142px;text-align:center;-webkit-text-stroke:0.5px #fff;">ADELAIDE</div>
<div class="r" style="left:1930px;top:1358.5px;width:48px;height:32.0px;background:#17a2b8;border-radius:6px;"></div>
<div class="t" style="top:1365px;font-size:17px;color:#fff;letter-spacing:-0.6px;left:1910.00px;width:88px;text-align:center;-webkit-text-stroke:0.5px #fff;">SA</div>
<div class="t" style="top:1361px;font-size:23px;color:#3a3a3a;letter-spacing:-0.4px;left:2116.00px;width:300px;text-align:right;-webkit-text-stroke:0.25px #3a3a3a;">2021-07-25 09:17:52</div>
<div class="r" style="left:2486px;top:1358.5px;width:96px;height:32.0px;background:#007bff;border-radius:6px;"></div>
<div class="t" style="top:1365px;font-size:17px;color:#fff;letter-spacing:-0.7px;left:2464.00px;width:140px;text-align:center;-webkit-text-stroke:0.5px #fff;">PENDING</div>
<div class="r" style="left:2632px;top:1356.5px;width:44px;height:36.0px;background:#28a745;border-radius:6px;"></div>
<div class="r" style="left:2680px;top:1356.5px;width:42px;height:36.0px;background:#7ac3ce;border-radius:6px;"></div>
<div class="r" style="left:2728px;top:1356.5px;width:38px;height:36.0px;background:#dc3545;border-radius:6px;"></div>
<svg style="left:2646px;top:1366.00px" width="16" height="12" viewBox="0 0 16 12"><path d="M2,5.5 L6,9.5 L14,1.5" fill="none" stroke="#fff" stroke-width="2.8"/></svg>
<svg style="left:2694px;top:1365.00px" width="14" height="14" viewBox="0 0 14 14"><circle cx="7" cy="3.6" r="3.2" fill="#fff"/><path d="M1,10.5 C1,8 3,7.2 5,7.2 H9 C11,7.2 13,8 13,10.5 V13 H1 Z" fill="#fff"/></svg>
<svg style="left:2740px;top:1366.00px" width="12" height="12" viewBox="0 0 12 12"><path d="M2.5,2.3 L10,9.8 M10,2.3 L2.5,9.8" fill="none" stroke="#fff" stroke-width="2.5"/></svg>
<script>(function(){var w=window.innerWidth;if(w&&Math.abs(w-2880)>4){document.documentElement.style.zoom=(w/2880);}})();</script>
</body></html>
